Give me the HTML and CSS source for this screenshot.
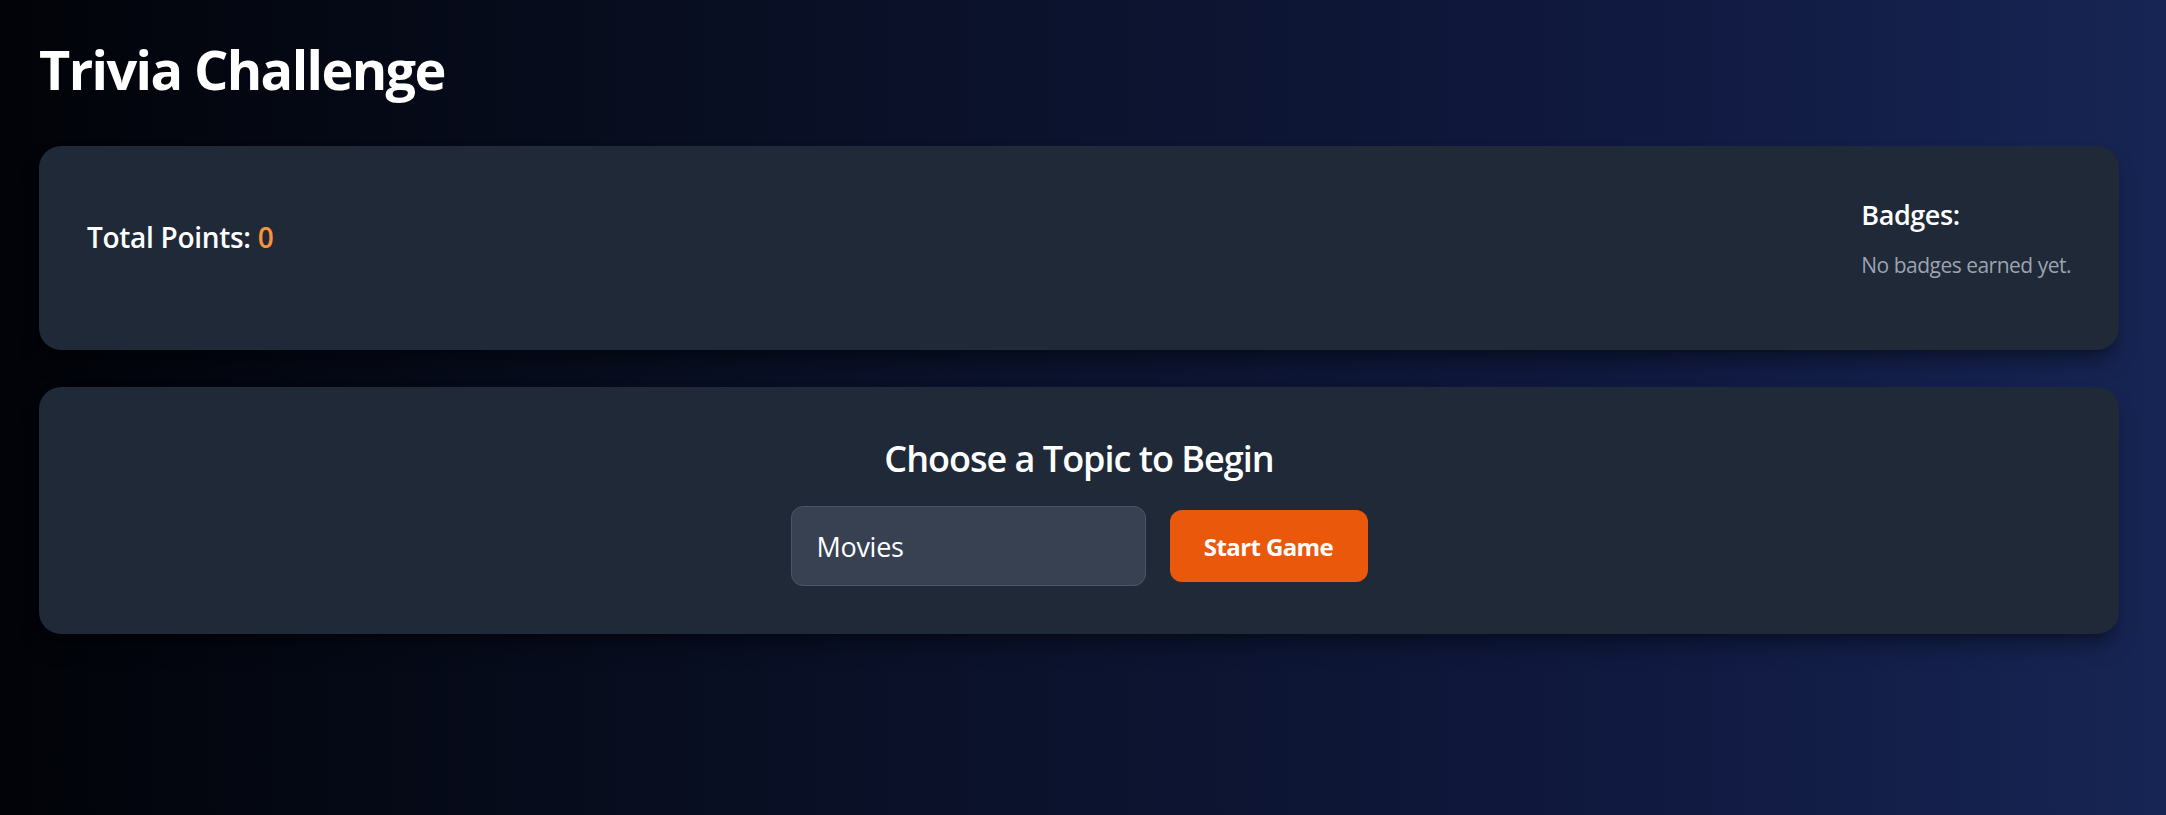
FILE: index.html
```html
<!DOCTYPE html>
<html lang="en">
<head>
<meta charset="utf-8">
<title>Trivia Challenge</title>
<link rel="stylesheet" href="styles.css">
</head>
<body>
  <main class="app">
    <h1 class="title">Trivia Challenge</h1>

    <section class="card stats">
      <h2 class="points">Total Points: <span class="points-value">0</span></h2>
      <div class="badges">
        <h3 class="badges-title">Badges:</h3>
        <p class="badges-empty">No badges earned yet.</p>
      </div>
    </section>

    <section class="card topic">
      <h2 class="topic-title">Choose a Topic to Begin</h2>
      <div class="topic-row">
        <select class="topic-select">
          <option>Movies</option>
          <option>Science</option>
          <option>History</option>
        </select>
        <button class="start-btn">Start Game</button>
      </div>
    </section>
  </main>
</body>
</html>
```

FILE: styles.css
```css
* { box-sizing: border-box; }

html, body {
  margin: 0;
  padding: 0;
}

body {
  min-height: 815px;
  font-family: "Open Sans", "Noto Sans", sans-serif;
  color: #ffffff;
  background: linear-gradient(to right, #010308 0%, #070c1c 25%, #0c132e 50%, #10193f 75%, #172554 100%);
}

.app {
  padding: 39px 47px 40px 39px;
}

.title {
  margin: 0 0 47px 0;
  font-size: 54px;
  line-height: 60px;
  font-weight: 700;
  letter-spacing: -1.6px;
}

.card {
  background: #1f2937;
  border-radius: 22px;
  padding: 48px;
  box-shadow: 0 15px 22px -4px rgba(0, 0, 0, 0.35), 0 6px 9px -6px rgba(0, 0, 0, 0.35);
}

.stats {
  display: flex;
  justify-content: space-between;
  align-items: flex-start;
  margin-bottom: 37px;
}

.points {
  margin: 22px 0 0 0;
  font-size: 28px;
  line-height: 42px;
  font-weight: 600;
  letter-spacing: -0.3px;
}

.points-value {
  color: #fb923c;
}

.badges {
  padding-bottom: 22px;
}

.badges-title {
  margin: 0;
  font-size: 27px;
  line-height: 42px;
  font-weight: 600;
  letter-spacing: -0.4px;
}

.badges-empty {
  margin: 14px 0 0 0;
  font-size: 21px;
  line-height: 30px;
  color: #9ca3af;
  letter-spacing: -0.5px;
}

.topic {
  display: flex;
  flex-direction: column;
  align-items: center;
}

.topic-title {
  margin: 0 0 23px 0;
  font-size: 36px;
  line-height: 48px;
  font-weight: 600;
  letter-spacing: -1px;
}

.topic-row {
  display: flex;
  align-items: center;
  gap: 24px;
}

.topic-select {
  appearance: none;
  -webkit-appearance: none;
  width: 355px;
  height: 80px;
  padding: 0 25px;
  background: #374151;
  border: 1px solid #4b5563;
  border-radius: 12px;
  color: #ffffff;
  font-family: "Open Sans", "Noto Sans", sans-serif;
  font-size: 27px;
  letter-spacing: -0.3px;
}

.start-btn {
  width: 198px;
  height: 72px;
  border: none;
  border-radius: 12px;
  background: #ea580c;
  color: #ffffff;
  font-family: "Open Sans", "Noto Sans", sans-serif;
  font-size: 24px;
  font-weight: 700;
  letter-spacing: -0.6px;
  cursor: pointer;
}
```
